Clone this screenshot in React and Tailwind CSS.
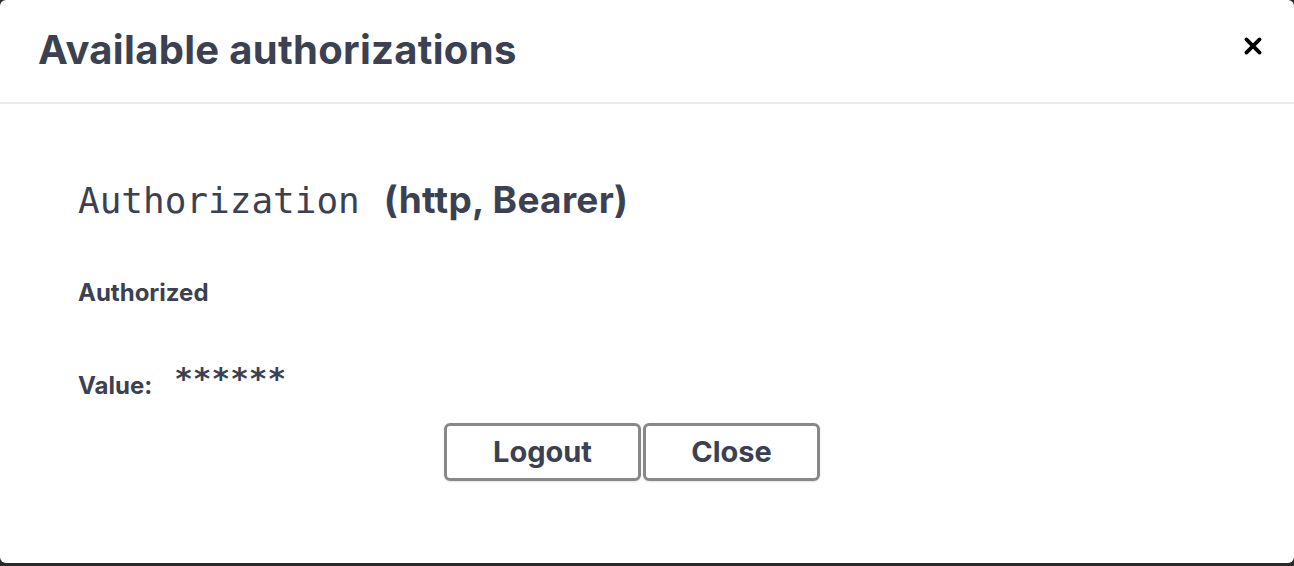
import React from 'react';

export default function App() {
  return (
    <div className="w-[1294px] h-[566px] bg-[#2a2a2a] overflow-hidden" style={{ fontFamily: 'Inter, "Open Sans", sans-serif' }}>
      <div className="h-[563px] bg-white rounded-[6px] text-[#3b4151] flex flex-col">
        {/* Header */}
        <div className="h-[104px] flex items-center justify-between pl-[38px] pr-[30px] border-b-2 border-[#ebebeb]">
          <h3 className="text-[40px] font-bold leading-none tracking-[0.3px] pb-[2px]">Available authorizations</h3>
          <button className="text-black mb-[10px]">
            <svg width="22" height="22" viewBox="0 0 20 20">
              <path d="M4 4 L16 16 M16 4 L4 16" stroke="currentColor" strokeWidth="3.4" strokeLinecap="round" />
            </svg>
          </button>
        </div>

        {/* Body */}
        <div className="pl-[78px] pt-[77px]">
          <h4 className="flex items-baseline leading-none">
            <code className="text-[36px] font-normal" style={{ fontFamily: '"DejaVu Sans Mono", monospace' }}>Authorization</code>
            <span className="text-[37px] font-bold ml-[24px] tracking-[0.3px]">(http, Bearer)</span>
          </h4>
          <h6 className="text-[24px] font-bold mt-[62px] leading-none">Authorized</h6>
          <div className="flex items-end mt-[58px]">
            <span className="text-[24px] font-bold leading-none">Value:</span>
            <code className="text-[31px] font-bold leading-none ml-[22px] mb-[4px]" style={{ fontFamily: '"DejaVu Sans Mono", monospace' }}>******</code>
          </div>
        </div>

        <div className="flex justify-center pr-[30px] mt-[25px]">
          <button className="w-[197px] h-[58px] border-[3px] border-[#888888] rounded-[6px] text-[29px] font-bold text-[#3b4151] shadow-[0_1px_2px_rgba(0,0,0,0.1)]">Logout</button>
          <button className="w-[177px] h-[58px] ml-[2px] border-[3px] border-[#888888] rounded-[6px] text-[29px] font-bold text-[#3b4151] shadow-[0_1px_2px_rgba(0,0,0,0.1)]">Close</button>
        </div>
      </div>
    </div>
  );
}
